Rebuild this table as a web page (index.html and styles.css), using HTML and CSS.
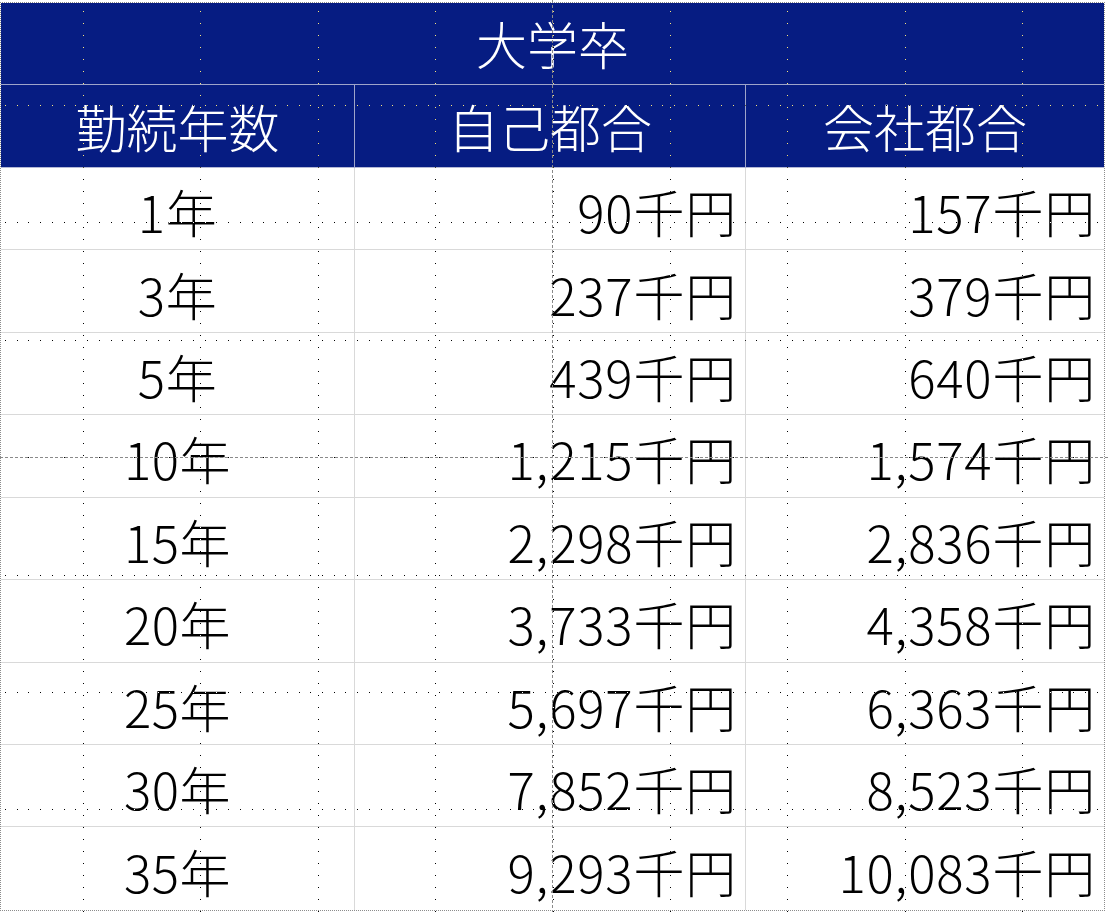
FILE: index.html
```html
<!DOCTYPE html>
<html lang="ja">
<head>
<meta charset="utf-8">
<title>大学卒</title>
<link rel="stylesheet" href="styles.css">
</head>
<body>
<div class="sheet">
  <div class="table">
    <div class="cell title">大学卒</div>
    <div class="cell head">勤続年数</div>
    <div class="cell head">自己都合</div>
    <div class="cell head last">会社都合</div>

    <div class="cell yr">1年</div><div class="cell num">90千円</div><div class="cell num last">157千円</div>
    <div class="cell yr">3年</div><div class="cell num">237千円</div><div class="cell num last">379千円</div>
    <div class="cell yr">5年</div><div class="cell num">439千円</div><div class="cell num last">640千円</div>
    <div class="cell yr">10年</div><div class="cell num">1,215千円</div><div class="cell num last">1,574千円</div>
    <div class="cell yr">15年</div><div class="cell num">2,298千円</div><div class="cell num last">2,836千円</div>
    <div class="cell yr">20年</div><div class="cell num">3,733千円</div><div class="cell num last">4,358千円</div>
    <div class="cell yr">25年</div><div class="cell num">5,697千円</div><div class="cell num last">6,363千円</div>
    <div class="cell yr">30年</div><div class="cell num">7,852千円</div><div class="cell num last">8,523千円</div>
    <div class="cell yr bottom">35年</div><div class="cell num bottom">9,293千円</div><div class="cell num last bottom">10,083千円</div>
  </div>
</div>
<div class="overlay">
  <div class="dots-v"></div>
  <div class="dots-h"></div>
  <div class="break-v"></div>
  <div class="break-h"></div>
</div>
</body>
</html>
```
FILE: styles.css
```css
html, body {
  margin: 0;
  padding: 0;
  background: #ffffff;
}
body {
  width: 1108px;
  height: 912px;
  overflow: hidden;
  position: relative;
  font-family: "Noto Sans CJK JP", "Noto Sans", sans-serif;
}
.sheet {
  margin-top: 2px;
  width: 1103px;
  height: 907px;
  border: 1px dotted #8c8c8c;
}
.table {
  display: grid;
  grid-template-columns: 354px 391px 358px;
  grid-template-rows: repeat(11, 82.45px);
}
.cell {
  box-sizing: border-box;
  display: flex;
  align-items: center;
  font-size: 51px;
  font-weight: 300;
  line-height: 1;
  color: #000;
  border-right: 1px solid #d9d9d9;
  border-bottom: 1px solid #d9d9d9;
  padding-top: 6px;
}
.cell.last { border-right: none; }
.cell.bottom { border-bottom: none; }
.title {
  grid-column: 1 / 4;
  background: #061c82;
  color: #fff;
  justify-content: center;
  border-right: none;
  border-bottom: 1px solid #9ea4c9;
  padding-top: 0;
}
.head {
  background: #061c82;
  color: #fff;
  justify-content: center;
  border-right-color: #9ea4c9;
  border-bottom-color: #b3b8d6;
  padding-top: 0;
}
.yr {
  justify-content: center;
  letter-spacing: 0.5px;
}
.num {
  justify-content: flex-end;
  padding-right: 8px;
  letter-spacing: 0.8px;
}
.overlay {
  position: absolute;
  inset: 0;
  pointer-events: none;
}
.dots-v {
  position: absolute;
  inset: 0;
  background: repeating-linear-gradient(to right, transparent 0 83px, #fff 83px 84px, transparent 84px 117.375px);
  -webkit-mask-image: repeating-linear-gradient(to bottom, transparent 0 11px, #000 11px 12px, transparent 12px 11.74px);
  mask-image: repeating-linear-gradient(to bottom, transparent 0 11px, #000 11px 12px, transparent 12px 11.74px);
  mix-blend-mode: difference;
}
.dots-h {
  position: absolute;
  inset: 0;
  background: repeating-linear-gradient(to bottom, transparent 0 105px, #fff 105px 106px, transparent 106px 117.4px);
  -webkit-mask-image: repeating-linear-gradient(to right, transparent 0 5px, #000 5px 6px, transparent 6px 11.74px);
  mask-image: repeating-linear-gradient(to right, transparent 0 5px, #000 5px 6px, transparent 6px 11.74px);
  mix-blend-mode: difference;
}
.break-v {
  position: absolute;
  left: 552px;
  top: 0;
  width: 1px;
  height: 912px;
  background: repeating-linear-gradient(to bottom, #8a8a8a 0 3px, transparent 3px 5px);
}
.break-h {
  position: absolute;
  top: 457px;
  left: 0;
  width: 1108px;
  height: 1px;
  background: repeating-linear-gradient(to right, #8a8a8a 0 3px, transparent 3px 5px);
}
```
